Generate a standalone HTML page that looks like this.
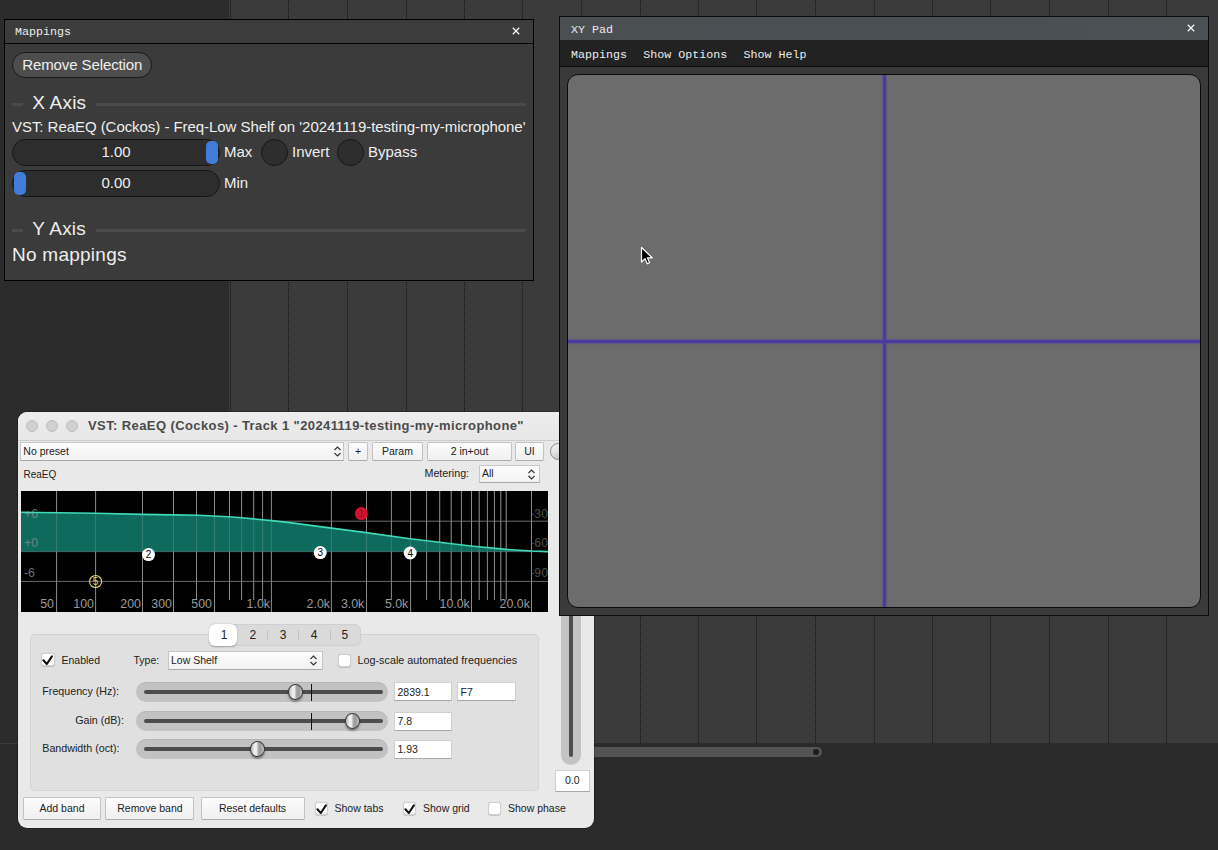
<!DOCTYPE html>
<html><head><meta charset="utf-8">
<style>
*{box-sizing:border-box}
html,body{margin:0;padding:0}
body{width:1218px;height:850px;overflow:hidden;position:relative;background:#242424;font-family:"Liberation Sans",sans-serif}
.a{position:absolute}
.dl{position:absolute;width:1px;background:repeating-linear-gradient(to bottom,#141414 0 1px,transparent 1px 2px)}
.mono{font-family:"Liberation Mono",monospace}
.t{position:absolute;white-space:nowrap;line-height:1}
.im{color:#eeeeee;font-size:15px}
.mac{color:#222;font-size:10.5px}
.btn{position:absolute;background:linear-gradient(#fcfcfc,#f0f0f0);border:1px solid #c2c2c2;border-bottom-color:#adadad;border-radius:2px;text-align:center;font-size:10.5px;color:#222;white-space:nowrap}
.cb{position:absolute;width:13px;height:13px;background:#fff;border:1px solid #cfcfcf;border-radius:3px;box-shadow:0 0.5px 1px rgba(0,0,0,.15)}
.tb{position:absolute;background:#fff;border:1px solid #d0d0d0;border-bottom-color:#a8a8a8;font-size:10.5px;color:#222;padding-left:3px;white-space:nowrap;line-height:1}
.sl{position:absolute;height:19.5px;border-radius:10px;background:#c2c2c2;box-shadow:inset 0 1px 0 rgba(0,0,0,.06)}
.sg{position:absolute;height:3.6px;border-radius:2px;background:#4d4d4d}
.kn{position:absolute;width:15px;height:15.5px;border-radius:50%;background:linear-gradient(90deg,#b9b9b9 0,#f2f2f2 30%,#e6e6e6 45%,#a9a9a9 55%,#9a9a9a 75%,#c9c9c9 100%);border:1px solid #3a3a3a;box-shadow:0 2px 2px rgba(0,0,0,.35)}
</style></head>
<body>
<!-- DAW background -->
<div class="a" style="left:0;top:0;width:229px;height:743px;background:#2c2c2c"></div>
<div class="a" style="left:0;top:743px;width:1218px;height:107px;background:#2b2b2b"></div>
<div class="a" style="left:0;top:743px;width:18px;height:1px;background:#3c3c3c"></div>
<div class="a" style="left:229px;top:0;width:989px;height:743px;background:#3b3b3b"></div>
<div class="dl" style="left:230px;top:0;height:743px"></div>
<div class="dl" style="left:288px;top:0;height:743px"></div>
<div class="dl" style="left:347px;top:0;height:743px"></div>
<div class="dl" style="left:406px;top:0;height:743px"></div>
<div class="dl" style="left:464px;top:0;height:743px"></div>
<div class="dl" style="left:522px;top:0;height:743px"></div>
<div class="dl" style="left:581px;top:0;height:743px"></div>
<div class="dl" style="left:640px;top:0;height:743px"></div>
<div class="dl" style="left:698px;top:0;height:743px"></div>
<div class="dl" style="left:756px;top:0;height:743px"></div>
<div class="dl" style="left:815px;top:0;height:743px"></div>
<div class="dl" style="left:874px;top:0;height:743px"></div>
<div class="dl" style="left:932px;top:0;height:743px"></div>
<div class="dl" style="left:990px;top:0;height:743px"></div>
<div class="dl" style="left:1049px;top:0;height:743px"></div>
<div class="dl" style="left:1108px;top:0;height:743px"></div>
<div class="dl" style="left:1166px;top:0;height:743px"></div>
<!-- scrollbar -->
<div class="a" style="left:560px;top:747px;width:262px;height:10px;background:#545454;border-radius:5px"></div>
<div class="a" style="left:813px;top:749px;width:6px;height:6px;background:#1c1c1c;border-radius:50%"></div>
<!-- ReaEQ window -->
<div class="a" style="left:18px;top:412px;width:576px;height:416px;background:#e9e9e9;border-radius:9px;overflow:hidden;box-shadow:0 0 0 0.5px rgba(0,0,0,.5)">
  <!-- title bar -->
  <div class="a" style="left:0;top:0;width:576px;height:29px;background:linear-gradient(#ededed,#e7e7e7);border-bottom:1px solid #cdcdcd"></div>
  <div class="a" style="left:8px;top:8px;width:12px;height:12px;border-radius:50%;background:#d0d0d0;border:0.5px solid #bcbcbc"></div>
  <div class="a" style="left:28px;top:8px;width:12px;height:12px;border-radius:50%;background:#d0d0d0;border:0.5px solid #bcbcbc"></div>
  <div class="a" style="left:48px;top:8px;width:12px;height:12px;border-radius:50%;background:#d0d0d0;border:0.5px solid #bcbcbc"></div>
  <div class="t" style="left:70px;top:7px;font-size:13px;font-weight:bold;color:#4b4b4b;letter-spacing:0.4px">VST: ReaEQ (Cockos) - Track 1 "20241119-testing-my-microphone"</div>
  <!-- toolbar -->
  <div class="tb" style="left:2px;top:30px;width:324px;height:19px;background:linear-gradient(#fdfdfd,#f2f2f2);border-color:#c6c6c6;border-bottom-color:#a9a9a9"></div>
  <div class="t mac" style="left:5.3px;top:34.3px;font-size:10.5px">No preset</div>
  <svg class="a" style="left:315px;top:33px" width="9" height="13"><path d="M1.5 5 L4.5 2 L7.5 5 M1.5 8 L4.5 11 L7.5 8" fill="none" stroke="#333" stroke-width="1.2"/></svg>
  <div class="btn" style="left:330px;top:30px;width:20px;height:19px"></div>
  <div class="t mac" style="left:330px;top:34px;width:20px;text-align:center;font-size:10.5px">+</div>
  <div class="btn" style="left:354px;top:30px;width:51px;height:19px"></div>
  <div class="t mac" style="left:354px;top:34px;width:51px;text-align:center;font-size:10.5px">Param</div>
  <div class="btn" style="left:409px;top:30px;width:85px;height:19px"></div>
  <div class="t mac" style="left:409px;top:34px;width:85px;text-align:center;font-size:10.5px">2 in+out</div>
  <div class="btn" style="left:497px;top:30px;width:29px;height:19px"></div>
  <div class="t mac" style="left:497px;top:34px;width:29px;text-align:center;font-size:10.5px">UI</div>
  <div class="a" style="left:532px;top:31px;width:16.5px;height:16.5px;border-radius:50%;background:linear-gradient(160deg,#f4f4f4 0,#e2e2e2 45%,#bdbdbd 100%);border:1px solid #8a8a8a"></div>
  <div class="t mac" style="left:5.5px;top:57.5px;font-size:10px">ReaEQ</div>
  <div class="t mac" style="left:406.5px;top:56.3px;font-size:10.7px">Metering:</div>
  <div class="tb" style="left:461px;top:53px;width:61px;height:18px;background:linear-gradient(#fdfdfd,#f2f2f2);border-color:#c6c6c6;border-bottom-color:#a9a9a9"></div>
  <div class="t mac" style="left:464px;top:56.3px">All</div>
  <svg class="a" style="left:509px;top:55.5px" width="9" height="13"><path d="M1.5 5 L4.5 2 L7.5 5 M1.5 8 L4.5 11 L7.5 8" fill="none" stroke="#333" stroke-width="1.2"/></svg>
  <svg class="a" style="left:3px;top:79px" width="527" height="121" viewBox="0 0 527 121" font-family="Liberation Sans">
<rect width="527" height="121" fill="#000"/>
<line x1="35.6" y1="0" x2="35.6" y2="121" stroke="#7a7a7a" stroke-width="1"/>
<line x1="74.6" y1="0" x2="74.6" y2="121" stroke="#7a7a7a" stroke-width="1"/>
<line x1="121.5" y1="0" x2="121.5" y2="121" stroke="#7a7a7a" stroke-width="1"/>
<line x1="152.5" y1="0" x2="152.5" y2="121" stroke="#7a7a7a" stroke-width="1"/>
<line x1="193.5" y1="0" x2="193.5" y2="121" stroke="#7a7a7a" stroke-width="1"/>
<line x1="250.4" y1="0" x2="250.4" y2="121" stroke="#7a7a7a" stroke-width="1"/>
<line x1="310.4" y1="0" x2="310.4" y2="121" stroke="#7a7a7a" stroke-width="1"/>
<line x1="345.5" y1="0" x2="345.5" y2="121" stroke="#7a7a7a" stroke-width="1"/>
<line x1="389.6" y1="0" x2="389.6" y2="121" stroke="#7a7a7a" stroke-width="1"/>
<line x1="450.5" y1="0" x2="450.5" y2="121" stroke="#7a7a7a" stroke-width="1"/>
<line x1="510.5" y1="0" x2="510.5" y2="121" stroke="#7a7a7a" stroke-width="1"/>
<line x1="175.5" y1="0" x2="175.5" y2="109" stroke="#7a7a7a" stroke-width="1"/>
<line x1="208.5" y1="0" x2="208.5" y2="109" stroke="#7a7a7a" stroke-width="1"/>
<line x1="220.6" y1="0" x2="220.6" y2="109" stroke="#7a7a7a" stroke-width="1"/>
<line x1="232.7" y1="0" x2="232.7" y2="109" stroke="#7a7a7a" stroke-width="1"/>
<line x1="241.6" y1="0" x2="241.6" y2="109" stroke="#7a7a7a" stroke-width="1"/>
<line x1="370.4" y1="0" x2="370.4" y2="109" stroke="#7a7a7a" stroke-width="1"/>
<line x1="405.6" y1="0" x2="405.6" y2="109" stroke="#7a7a7a" stroke-width="1"/>
<line x1="418.7" y1="0" x2="418.7" y2="109" stroke="#7a7a7a" stroke-width="1"/>
<line x1="430.2" y1="0" x2="430.2" y2="109" stroke="#7a7a7a" stroke-width="1"/>
<line x1="440.4" y1="0" x2="440.4" y2="109" stroke="#7a7a7a" stroke-width="1"/>
<line x1="458.2" y1="0" x2="458.2" y2="109" stroke="#7a7a7a" stroke-width="1"/>
<line x1="466.4" y1="0" x2="466.4" y2="109" stroke="#7a7a7a" stroke-width="1"/>
<line x1="473.4" y1="0" x2="473.4" y2="109" stroke="#7a7a7a" stroke-width="1"/>
<line x1="479.8" y1="0" x2="479.8" y2="109" stroke="#7a7a7a" stroke-width="1"/>
<line x1="485.2" y1="0" x2="485.2" y2="109" stroke="#7a7a7a" stroke-width="1"/>
<line x1="0" y1="30.2" x2="527" y2="30.2" stroke="#6a6a6a" stroke-width="1"/>
<line x1="0" y1="60.6" x2="527" y2="60.6" stroke="#6a6a6a" stroke-width="1"/>
<line x1="0" y1="90.4" x2="527" y2="90.4" stroke="#6a6a6a" stroke-width="1"/>
<text x="527" y="26.900000000000002" font-size="12.3" fill="#4e4e4e" text-anchor="end">-30</text>
<text x="527" y="56.3" font-size="12.3" fill="#4e4e4e" text-anchor="end">-60</text>
<text x="527" y="86.3" font-size="12.3" fill="#4e4e4e" text-anchor="end">-90</text>
<path d="M0,21.2 L74.4,22.3 L121,23.4 L152,23.9 L176.3,24.2 L192,25 L207,25.8 L220.7,26.8 L250.6,29.6 L269,31.6 L299,35.6 L345,41.6 L389,47.8 L450,55 L485,58.4 L510,60.0 L527,60.6 L527,60.6 L0,60.6 Z" fill="#0f6a5e"/>
<line x1="35.6" y1="0" x2="35.6" y2="121" stroke="#c0c0c0" stroke-opacity="0.22" stroke-width="1"/>
<line x1="74.6" y1="0" x2="74.6" y2="121" stroke="#c0c0c0" stroke-opacity="0.22" stroke-width="1"/>
<line x1="121.5" y1="0" x2="121.5" y2="121" stroke="#c0c0c0" stroke-opacity="0.22" stroke-width="1"/>
<line x1="152.5" y1="0" x2="152.5" y2="121" stroke="#c0c0c0" stroke-opacity="0.22" stroke-width="1"/>
<line x1="193.5" y1="0" x2="193.5" y2="121" stroke="#c0c0c0" stroke-opacity="0.22" stroke-width="1"/>
<line x1="250.4" y1="0" x2="250.4" y2="121" stroke="#c0c0c0" stroke-opacity="0.22" stroke-width="1"/>
<line x1="310.4" y1="0" x2="310.4" y2="121" stroke="#c0c0c0" stroke-opacity="0.22" stroke-width="1"/>
<line x1="345.5" y1="0" x2="345.5" y2="121" stroke="#c0c0c0" stroke-opacity="0.22" stroke-width="1"/>
<line x1="389.6" y1="0" x2="389.6" y2="121" stroke="#c0c0c0" stroke-opacity="0.22" stroke-width="1"/>
<line x1="450.5" y1="0" x2="450.5" y2="121" stroke="#c0c0c0" stroke-opacity="0.22" stroke-width="1"/>
<line x1="510.5" y1="0" x2="510.5" y2="121" stroke="#c0c0c0" stroke-opacity="0.22" stroke-width="1"/>
<line x1="175.5" y1="0" x2="175.5" y2="109" stroke="#c0c0c0" stroke-opacity="0.22" stroke-width="1"/>
<line x1="208.5" y1="0" x2="208.5" y2="109" stroke="#c0c0c0" stroke-opacity="0.22" stroke-width="1"/>
<line x1="220.6" y1="0" x2="220.6" y2="109" stroke="#c0c0c0" stroke-opacity="0.22" stroke-width="1"/>
<line x1="232.7" y1="0" x2="232.7" y2="109" stroke="#c0c0c0" stroke-opacity="0.22" stroke-width="1"/>
<line x1="241.6" y1="0" x2="241.6" y2="109" stroke="#c0c0c0" stroke-opacity="0.22" stroke-width="1"/>
<line x1="370.4" y1="0" x2="370.4" y2="109" stroke="#c0c0c0" stroke-opacity="0.22" stroke-width="1"/>
<line x1="405.6" y1="0" x2="405.6" y2="109" stroke="#c0c0c0" stroke-opacity="0.22" stroke-width="1"/>
<line x1="418.7" y1="0" x2="418.7" y2="109" stroke="#c0c0c0" stroke-opacity="0.22" stroke-width="1"/>
<line x1="430.2" y1="0" x2="430.2" y2="109" stroke="#c0c0c0" stroke-opacity="0.22" stroke-width="1"/>
<line x1="440.4" y1="0" x2="440.4" y2="109" stroke="#c0c0c0" stroke-opacity="0.22" stroke-width="1"/>
<line x1="458.2" y1="0" x2="458.2" y2="109" stroke="#c0c0c0" stroke-opacity="0.22" stroke-width="1"/>
<line x1="466.4" y1="0" x2="466.4" y2="109" stroke="#c0c0c0" stroke-opacity="0.22" stroke-width="1"/>
<line x1="473.4" y1="0" x2="473.4" y2="109" stroke="#c0c0c0" stroke-opacity="0.22" stroke-width="1"/>
<line x1="479.8" y1="0" x2="479.8" y2="109" stroke="#c0c0c0" stroke-opacity="0.22" stroke-width="1"/>
<line x1="485.2" y1="0" x2="485.2" y2="109" stroke="#c0c0c0" stroke-opacity="0.22" stroke-width="1"/>
<text x="3" y="26.900000000000002" font-size="12.3" fill="#8c8c8c" fill-opacity="0.8">+6</text>
<text x="3" y="56.3" font-size="12.3" fill="#8c8c8c" fill-opacity="0.8">+0</text>
<text x="3" y="86.3" font-size="12.3" fill="#8c8c8c" fill-opacity="0.8">-6</text>
<path d="M0,21.2 L74.4,22.3 L121,23.4 L152,23.9 L176.3,24.2 L192,25 L207,25.8 L220.7,26.8 L250.6,29.6 L269,31.6 L299,35.6 L345,41.6 L389,47.8 L450,55 L485,58.4 L510,60.0 L527,60.6" fill="none" stroke="#3fd9b8" stroke-width="1.6"/>
<text x="33" y="117" font-size="12.4" fill="#9a9a9a" text-anchor="end">50</text>
<text x="73" y="117" font-size="12.4" fill="#9a9a9a" text-anchor="end">100</text>
<text x="120" y="117" font-size="12.4" fill="#9a9a9a" text-anchor="end">200</text>
<text x="151" y="117" font-size="12.4" fill="#9a9a9a" text-anchor="end">300</text>
<text x="191" y="117" font-size="12.4" fill="#9a9a9a" text-anchor="end">500</text>
<text x="249" y="117" font-size="12.4" fill="#9a9a9a" text-anchor="end">1.0k</text>
<text x="309" y="117" font-size="12.4" fill="#9a9a9a" text-anchor="end">2.0k</text>
<text x="343.3" y="117" font-size="12.4" fill="#9a9a9a" text-anchor="end">3.0k</text>
<text x="387.3" y="117" font-size="12.4" fill="#9a9a9a" text-anchor="end">5.0k</text>
<text x="448.8" y="117" font-size="12.4" fill="#9a9a9a" text-anchor="end">10.0k</text>
<text x="508.9" y="117" font-size="12.4" fill="#9a9a9a" text-anchor="end">20.0k</text>
<circle cx="340.4" cy="22.6" r="6.5" fill="#d2122e"/><text x="340.4" y="26.200000000000003" font-size="10" fill="#a00c20" text-anchor="middle">1</text>
<circle cx="127.5" cy="63.6" r="6.5" fill="#fff"/><text x="127.5" y="67.2" font-size="10" fill="#000" text-anchor="middle">2</text>
<circle cx="299.2" cy="61.6" r="6.5" fill="#fff"/><text x="299.2" y="65.2" font-size="10" fill="#000" text-anchor="middle">3</text>
<circle cx="389.2" cy="62" r="6.5" fill="#fff"/><text x="389.2" y="65.6" font-size="10" fill="#000" text-anchor="middle">4</text>
<circle cx="74.6" cy="90.5" r="6" fill="none" stroke="#d9d77a" stroke-width="1.1"/><text x="74.6" y="94.1" font-size="10" fill="#d9d77a" text-anchor="middle">5</text>
</svg>
  <!-- group box -->
  <div class="a" style="left:12px;top:221.5px;width:509px;height:157px;border-radius:5px;background:#e0e0e0;border:1px solid #d5d5d5;border-top-color:#d0d0d0"></div>
  <!-- tabs -->
  <div class="a" style="left:190.5px;top:212px;width:152.5px;height:22px;border-radius:6px;background:#dadada;border:0.5px solid #d0d0d0"></div>
  <div class="a" style="left:190.5px;top:212px;width:28.5px;height:22px;border-radius:6px;background:#fff;box-shadow:0 0.5px 1.5px rgba(0,0,0,.3)"></div>
  <div class="a" style="left:249px;top:218px;width:1px;height:10px;background:#c4c4c4"></div>
  <div class="a" style="left:280px;top:218px;width:1px;height:10px;background:#c4c4c4"></div>
  <div class="a" style="left:311.5px;top:218px;width:1px;height:10px;background:#c4c4c4"></div>
  <div class="t mac" style="left:196px;top:217px;width:20px;text-align:center;font-size:12px">1</div>
  <div class="t mac" style="left:224.8px;top:217px;width:20px;text-align:center;font-size:12px">2</div>
  <div class="t mac" style="left:255px;top:217px;width:20px;text-align:center;font-size:12px">3</div>
  <div class="t mac" style="left:286px;top:217px;width:20px;text-align:center;font-size:12px">4</div>
  <div class="t mac" style="left:316.8px;top:217px;width:20px;text-align:center;font-size:12px">5</div>
  <!-- row 1 -->
  <div class="cb" style="left:23.3px;top:241.2px;width:14px;height:13px"></div>
  <svg class="a" style="left:23.3px;top:241.2px" width="14" height="13"><path d="M2.4 7.3 L5.8 11 L10.9 3.4" fill="none" stroke="#111" stroke-width="2.1" stroke-linecap="round" stroke-linejoin="round"/></svg>
  <div class="t mac" style="left:43.5px;top:243px">Enabled</div>
  <div class="t mac" style="left:115.5px;top:243px">Type:</div>
  <div class="tb" style="left:150px;top:239.3px;width:155px;height:18.5px;background:linear-gradient(#fdfdfd,#f2f2f2);border-color:#c6c6c6;border-bottom-color:#a9a9a9"></div>
  <div class="t mac" style="left:153px;top:243px">Low Shelf</div>
  <svg class="a" style="left:291px;top:242px" width="9" height="13"><path d="M1.5 5 L4.5 2 L7.5 5 M1.5 8 L4.5 11 L7.5 8" fill="none" stroke="#333" stroke-width="1.2"/></svg>
  <div class="cb" style="left:319.5px;top:241.7px"></div>
  <div class="t mac" style="left:339.5px;top:243px;font-size:10.8px">Log-scale automated frequencies</div>
  <!-- sliders -->
  <div class="t mac" style="left:24.3px;top:274.2px;font-size:10.7px">Frequency (Hz):</div>
  <div class="t mac" style="left:57.2px;top:302.7px;font-size:10.7px">Gain (dB):</div>
  <div class="t mac" style="left:24.3px;top:331px;font-size:10.7px">Bandwidth (oct):</div>
  <div class="sl" style="left:118px;top:270.2px;width:252px"></div>
  <div class="sg" style="left:126px;top:278.1px;width:239px"></div>
  <div class="a" style="left:292.8px;top:272px;width:1.4px;height:17px;background:#111"></div>
  <div class="kn" style="left:270px;top:272.2px"></div>
  <div class="sl" style="left:118px;top:299.2px;width:252px"></div>
  <div class="sg" style="left:126px;top:307.1px;width:239px"></div>
  <div class="a" style="left:292.8px;top:300.8px;width:1.4px;height:17px;background:#111"></div>
  <div class="kn" style="left:326.9px;top:301px"></div>
  <div class="sl" style="left:118px;top:327.2px;width:252px"></div>
  <div class="sg" style="left:126px;top:335.2px;width:239px"></div>
  <div class="kn" style="left:231.8px;top:329.2px"></div>
  <div class="tb" style="left:375.5px;top:270.3px;width:58.5px;height:19px;padding-top:3.3px">2839.1</div>
  <div class="tb" style="left:438.5px;top:270.3px;width:59px;height:19px;padding-top:3.3px">F7</div>
  <div class="tb" style="left:375.5px;top:299.5px;width:58.5px;height:19px;padding-top:3.3px">7.8</div>
  <div class="tb" style="left:375.5px;top:327.5px;width:58.5px;height:19px;padding-top:3.3px">1.93</div>
  <!-- vertical slider -->
  <div class="a" style="left:543px;top:150px;width:20px;height:202.5px;border-radius:10px;background:#c3c3c3"></div>
  <div class="a" style="left:551.2px;top:150px;width:4px;height:195px;border-radius:2px;background:#4e4e4e"></div>
  <div class="tb" style="left:536.7px;top:357.5px;width:35.3px;height:22.7px;padding:4px 0 0 0;text-align:center">0.0</div>
  <!-- bottom buttons -->
  <div class="btn" style="left:5px;top:385.2px;width:78px;height:23px;padding-top:4.2px">Add band</div>
  <div class="btn" style="left:87.4px;top:385.2px;width:89px;height:23px;padding-top:4.2px">Remove band</div>
  <div class="btn" style="left:182.5px;top:385.2px;width:104px;height:23px;padding-top:4.2px">Reset defaults</div>
  <div class="cb" style="left:296.8px;top:389.7px"></div>
  <svg class="a" style="left:296.8px;top:389.7px" width="14" height="13"><path d="M2.4 7.3 L5.8 11 L10.9 3.4" fill="none" stroke="#111" stroke-width="2.1" stroke-linecap="round" stroke-linejoin="round"/></svg>
  <div class="t mac" style="left:316.5px;top:391px">Show tabs</div>
  <div class="cb" style="left:385.4px;top:389.7px"></div>
  <svg class="a" style="left:385.4px;top:389.7px" width="14" height="13"><path d="M2.4 7.3 L5.8 11 L10.9 3.4" fill="none" stroke="#111" stroke-width="2.1" stroke-linecap="round" stroke-linejoin="round"/></svg>
  <div class="t mac" style="left:405px;top:391px">Show grid</div>
  <div class="cb" style="left:470.4px;top:389.7px"></div>
  <div class="t mac" style="left:490px;top:391px">Show phase</div>
</div>

<!-- Mappings window -->
<div class="a" style="left:4px;top:19px;width:530px;height:262px;background:#3b3b3b;border:1px solid #000">
  <div class="a" style="left:0;top:0;width:528px;height:24px;background:#3c3c3c;border-bottom:1px solid #000"></div>
  <div class="t mono" style="left:10px;top:7.3px;font-size:11.67px;color:#ececec">Mappings</div>
  <svg class="a" style="left:506px;top:6px" width="10" height="10"><path d="M1.8 1.8L8.2 8.2M8.2 1.8L1.8 8.2" stroke="#f4f4f4" stroke-width="1.3"/></svg>
</div>
<!-- Remove selection button -->
<div class="a" style="left:12px;top:52px;width:140px;height:26px;border-radius:13px;background:#4d4d4d;border:1px solid #191919"></div>
<div class="t im" style="left:22.2px;top:57px;font-size:15px;letter-spacing:-0.1px">Remove Selection</div>
<!-- X Axis -->
<div class="a" style="left:12px;top:103px;width:11px;height:3px;background:#4a4a4a"></div>
<div class="t im" style="left:32.3px;top:93px;font-size:19px;letter-spacing:0.2px">X Axis</div>
<div class="a" style="left:96px;top:103px;width:430px;height:3px;background:#4a4a4a"></div>
<div class="t im" style="left:12px;top:119px;font-size:15px;letter-spacing:-0.05px">VST: ReaEQ (Cockos) - Freq-Low Shelf on '20241119-testing-my-microphone'</div>
<!-- slider 1 -->
<div class="a" style="left:12px;top:139px;width:208px;height:27px;border-radius:13.5px;background:#2d2d2d;border:1px solid #151515"></div>
<div class="a" style="left:206px;top:141px;width:12px;height:23px;border-radius:5px;background:#3f7ddb"></div>
<div class="t im" style="left:12px;top:144px;width:208px;text-align:center;font-size:15px">1.00</div>
<div class="t im" style="left:224px;top:144px;font-size:15px">Max</div>
<div class="a" style="left:261px;top:139px;width:27px;height:27px;border-radius:50%;background:#2e2e2e;border:1px solid #151515"></div>
<div class="t im" style="left:292px;top:144px;font-size:15px">Invert</div>
<div class="a" style="left:337px;top:139px;width:27px;height:27px;border-radius:50%;background:#2e2e2e;border:1px solid #151515"></div>
<div class="t im" style="left:368px;top:144px;font-size:15px">Bypass</div>
<!-- slider 2 -->
<div class="a" style="left:12px;top:170px;width:208px;height:27px;border-radius:13.5px;background:#2d2d2d;border:1px solid #151515"></div>
<div class="a" style="left:14px;top:172px;width:12px;height:23px;border-radius:5px;background:#3f7ddb"></div>
<div class="t im" style="left:12px;top:175px;width:208px;text-align:center;font-size:15px">0.00</div>
<div class="t im" style="left:224px;top:175px;font-size:15px">Min</div>
<!-- Y Axis -->
<div class="a" style="left:12px;top:229px;width:11px;height:3px;background:#4a4a4a"></div>
<div class="t im" style="left:32.3px;top:218.7px;font-size:19px;letter-spacing:0.2px">Y Axis</div>
<div class="a" style="left:96px;top:229px;width:430px;height:3px;background:#4a4a4a"></div>
<div class="t im" style="left:12px;top:244.6px;font-size:19px;letter-spacing:0.25px">No mappings</div>

<!-- XY Pad window -->
<div class="a" style="left:559px;top:16px;width:650px;height:600px;background:#3a3a3a;border:1px solid #0c0c0c">
  <div class="a" style="left:0;top:0;width:648px;height:23px;background:linear-gradient(90deg,#4b4f52,#485053 60%,#4c5154)"></div>
  <div class="a" style="left:0;top:23px;width:648px;height:27px;background:#222222;border-bottom:1px solid #0a0a0a"></div>
  <div class="t mono" style="left:11px;top:7.6px;font-size:11.67px;color:#ececec">XY Pad</div>
  <svg class="a" style="left:626px;top:5.6px" width="10" height="10"><path d="M1.8 1.8L8.2 8.2M8.2 1.8L1.8 8.2" stroke="#f4f4f4" stroke-width="1.3"/></svg>
  <div class="t mono" style="left:11px;top:32.6px;font-size:11.67px;color:#ececec">Mappings</div>
  <div class="t mono" style="left:83.3px;top:32.6px;font-size:11.67px;color:#ececec">Show Options</div>
  <div class="t mono" style="left:183.5px;top:32.6px;font-size:11.67px;color:#ececec">Show Help</div>
  <!-- pad -->
  <div class="a" style="left:7px;top:57px;width:634px;height:534px;border-radius:11px;background:#6c6c6c;border:1px solid #0a0a0a;overflow:hidden">
    <div class="a" style="left:315.3px;top:0;width:3px;height:534px;background:#4a3b9c;box-shadow:0 0 1.5px 1px rgba(90,70,170,.55)"></div>
    <div class="a" style="left:0;top:264.9px;width:634px;height:3px;background:#4a3b9c;box-shadow:0 0 1.5px 1px rgba(90,70,170,.55)"></div>
  </div>
</div>
<!-- cursor -->
<svg class="a" style="left:639.5px;top:245.5px" width="16" height="22" viewBox="0 0 16 22"><path d="M1.5 1.5 L1.5 16 L5 12.6 L7.3 17.8 L9.6 16.8 L7.4 11.8 L12.2 11.8 Z" fill="#000" stroke="#fff" stroke-width="1.2" stroke-linejoin="round"/></svg>

</body></html>
